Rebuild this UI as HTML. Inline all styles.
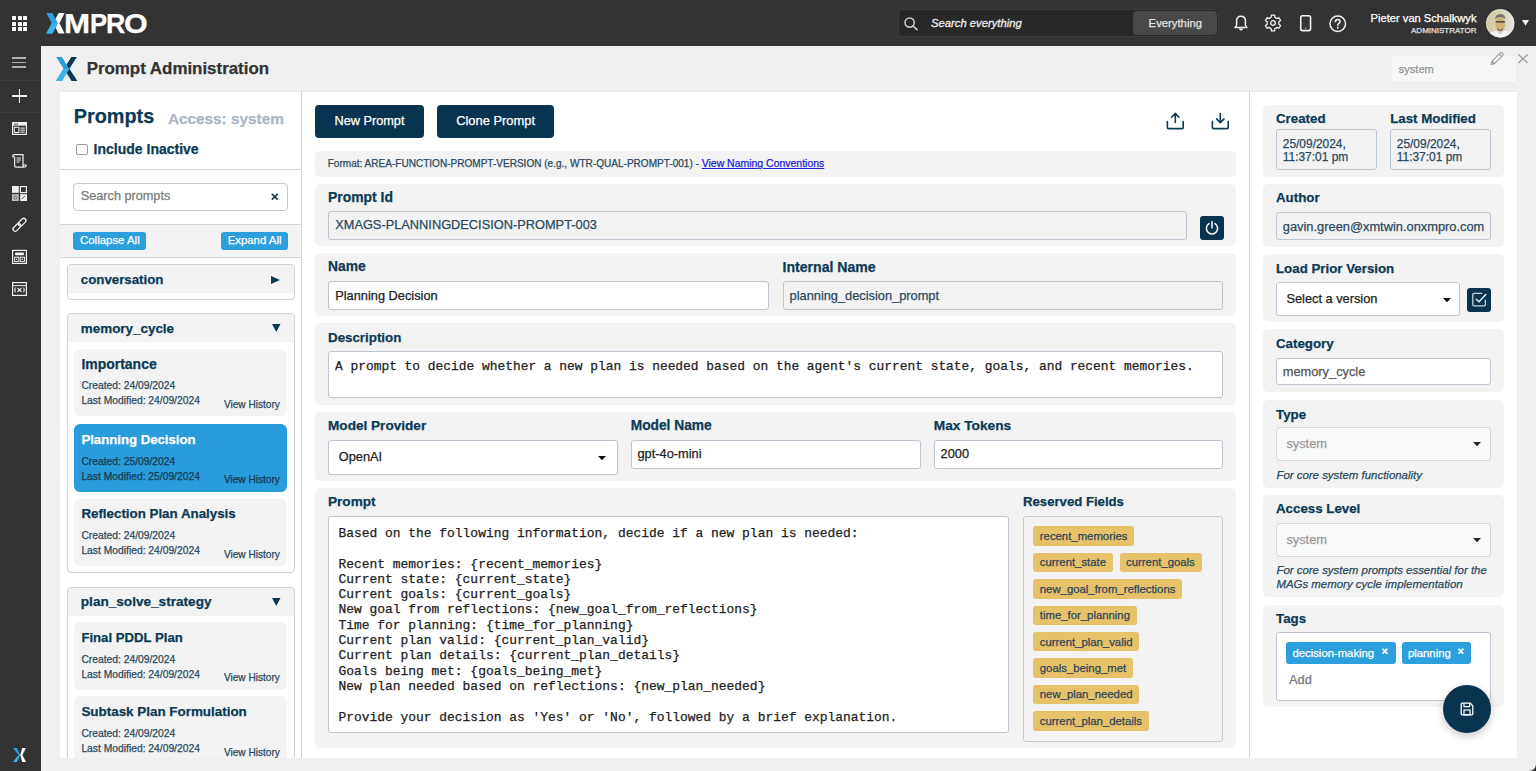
<!DOCTYPE html>
<html><head><meta charset="utf-8">
<style>
*{box-sizing:border-box;}
html,body{margin:0;padding:0;}
body{width:1536px;height:771px;overflow:hidden;position:relative;background:#333333;font-family:"Liberation Sans",sans-serif;}
.a{position:absolute;}
.t{position:absolute;white-space:nowrap;-webkit-text-stroke-width:0.25px;}
svg{position:absolute;overflow:visible;}
</style></head>
<body>
<div class="a" style="left:41px;top:46px;width:1495.00px;height:725.00px;background:#f0f0f0;border-bottom-right-radius:7px;"></div>
<div class="a" style="left:12.0px;top:16.0px;width:4.00px;height:4.00px;background:#fff;border-radius:0.5px;"></div>
<div class="a" style="left:17.5px;top:16.0px;width:4.00px;height:4.00px;background:#fff;border-radius:0.5px;"></div>
<div class="a" style="left:23.0px;top:16.0px;width:4.00px;height:4.00px;background:#fff;border-radius:0.5px;"></div>
<div class="a" style="left:12.0px;top:21.5px;width:4.00px;height:4.00px;background:#fff;border-radius:0.5px;"></div>
<div class="a" style="left:17.5px;top:21.5px;width:4.00px;height:4.00px;background:#fff;border-radius:0.5px;"></div>
<div class="a" style="left:23.0px;top:21.5px;width:4.00px;height:4.00px;background:#fff;border-radius:0.5px;"></div>
<div class="a" style="left:12.0px;top:27.0px;width:4.00px;height:4.00px;background:#fff;border-radius:0.5px;"></div>
<div class="a" style="left:17.5px;top:27.0px;width:4.00px;height:4.00px;background:#fff;border-radius:0.5px;"></div>
<div class="a" style="left:23.0px;top:27.0px;width:4.00px;height:4.00px;background:#fff;border-radius:0.5px;"></div>
<svg style="left:44px;top:11px" width="24" height="25" viewBox="44 11 24 25"><polygon points="58.6,13 64.6,13 59.4,23.2 64.6,33.4 58.6,33.4 53.2,23.2" fill="#ffffff"/>
<polygon points="46.3,13 52.4,13 57.9,23.2 52.4,33.4 46.3,33.4 51.7,23.2" fill="#2aa3e3"/>
<polygon points="51.7,23.2 57.9,23.2 52.4,33.4 46.3,33.4" fill="#38b5ec"/></svg>
<div class="t" style="left:63.90px;top:6.42px;font-size:28.5px;line-height:34.199999999999996px;color:#ffffff;font-weight:bold;font-family:'Liberation Sans',sans-serif;font-style:normal;transform:scaleX(1.1);transform-origin:0 0;">M</div>
<div class="t" style="left:89.70px;top:6.42px;font-size:28.5px;line-height:34.199999999999996px;color:#ffffff;font-weight:bold;font-family:'Liberation Sans',sans-serif;font-style:normal;transform:scaleX(0.9);transform-origin:0 0;">P</div>
<div class="t" style="left:105.70px;top:6.42px;font-size:28.5px;line-height:34.199999999999996px;color:#ffffff;font-weight:bold;font-family:'Liberation Sans',sans-serif;font-style:normal;transform:scaleX(0.94);transform-origin:0 0;">R</div>
<div class="t" style="left:123.80px;top:6.42px;font-size:28.5px;line-height:34.199999999999996px;color:#ffffff;font-weight:bold;font-family:'Liberation Sans',sans-serif;font-style:normal;transform:scaleX(1.07);transform-origin:0 0;">O</div>
<div class="a" style="left:897.5px;top:9px;width:321.00px;height:28.00px;background:#282828;border:1px solid #3c3c3c;border-radius:4px;"></div>
<svg style="left:904px;top:17px" width="15" height="13" viewBox="0 0 15 13"><circle cx="5.6" cy="5.6" r="4.6" fill="none" stroke="#cfcfcf" stroke-width="1.5"/><line x1="9" y1="9" x2="13" y2="12.6" stroke="#cfcfcf" stroke-width="1.6" stroke-linecap="round"/></svg>
<div class="t" style="left:931.00px;top:17.15px;font-size:11.25px;line-height:13.5px;color:#ececec;font-weight:normal;font-family:'Liberation Sans',sans-serif;font-style:italic;-webkit-text-stroke:0.3px #ececec;">Search everything</div>
<div class="a" style="left:1133px;top:11px;width:84.00px;height:24.00px;background:#484848;border-radius:4px;"></div>
<div class="t" style="left:1148.60px;top:17.10px;font-size:11.3px;line-height:13.56px;color:#e2e2e2;font-weight:normal;font-family:'Liberation Sans',sans-serif;font-style:normal;">Everything</div>
<svg style="left:1234px;top:15px" width="14" height="17" viewBox="0 0 14 17"><path d="M7 1.2 C4.2 1.2 2.6 3.4 2.6 6 V10.2 L1 12.6 H13 L11.4 10.2 V6 C11.4 3.4 9.8 1.2 7 1.2 Z" fill="none" stroke="#f2f2f2" stroke-width="1.5" stroke-linejoin="round"/><path d="M5.3 14 Q7 16.4 8.7 14 Z" fill="#f2f2f2" stroke="#f2f2f2" stroke-width="1"/></svg>
<svg style="left:1265.3px;top:15.4px" width="16" height="16" viewBox="0 0 16 16"><path fill="none" stroke="#f2f2f2" stroke-width="1.3" stroke-linejoin="round" d="M6.23 2.27 L6.41 0.16 L9.59 0.16 L9.77 2.27 L12.08 3.60 L14.00 2.70 L15.58 5.46 L13.85 6.67 L13.85 9.33 L15.58 10.54 L14.00 13.30 L12.08 12.40 L9.77 13.73 L9.59 15.84 L6.41 15.84 L6.23 13.73 L3.92 12.40 L2.00 13.30 L0.42 10.54 L2.15 9.33 L2.15 6.67 L0.42 5.46 L2.00 2.70 L3.92 3.60 Z"/><circle cx="8" cy="8" r="2.3" fill="none" stroke="#f2f2f2" stroke-width="1.3"/></svg>
<svg style="left:1299.8px;top:15.4px" width="11.5" height="16.5" viewBox="0 0 11.5 16.5"><rect x="0.75" y="0.75" width="9.8" height="14.9" rx="1.8" fill="none" stroke="#f2f2f2" stroke-width="1.6"/><circle cx="5.65" cy="13.2" r="0.6" fill="#f2f2f2"/></svg>
<svg style="left:1329px;top:14.5px" width="17.5" height="17.5" viewBox="0 0 18 18"><circle cx="9" cy="9" r="8" fill="none" stroke="#f2f2f2" stroke-width="1.5"/><path d="M6.6 7 Q6.6 4.6 9 4.6 Q11.4 4.6 11.4 6.8 Q11.4 8.2 9.8 8.9 Q9 9.3 9 10.6" fill="none" stroke="#f2f2f2" stroke-width="1.6" stroke-linecap="round"/><circle cx="9" cy="13.2" r="1" fill="#f2f2f2"/></svg>
<div class="t" style="right:59.50px;top:11.65px;font-size:11.15px;line-height:13.38px;color:#ffffff;font-weight:normal;font-family:'Liberation Sans',sans-serif;font-style:normal;">Pieter van Schalkwyk</div>
<div class="t" style="right:59.50px;top:25.73px;font-size:8.0px;line-height:9.6px;color:#e0e0e0;font-weight:normal;font-family:'Liberation Sans',sans-serif;font-style:normal;">ADMINISTRATOR</div>
<svg style="left:1485.5px;top:9.3px" width="28.5" height="28.8" viewBox="0 0 28.5 28.8"><defs><clipPath id="avc"><circle cx="14.25" cy="14.4" r="14.1"/></clipPath><linearGradient id="avbg" x1="0" y1="0" x2="1" y2="0"><stop offset="0" stop-color="#d4cba6"/><stop offset="0.5" stop-color="#d8d1b4"/><stop offset="1" stop-color="#e4e6e6"/></linearGradient></defs>
<g clip-path="url(#avc)"><rect x="0" y="0" width="28.5" height="28.8" fill="url(#avbg)"/>
<ellipse cx="14.3" cy="15" rx="4.8" ry="6.8" fill="#cfb173"/>
<path d="M9.2 11 Q9 5 14.2 5 Q19.4 5 19.4 10.6 Q18 7.8 14.2 8 Q10.6 7.8 9.2 11 Z" fill="#77746c"/>
<rect x="9.6" y="12" width="9.4" height="1.6" rx="0.6" fill="#4a4740"/>
<path d="M11 18.5 Q14.3 22.5 17.4 18.5 L17 21.2 Q14.3 23.4 11.4 21.2 Z" fill="#857a66"/>
<path d="M0 27 Q5 22 10.5 21.8 L14.3 25.5 L18 21.8 Q23.5 22 28.5 26 V28.8 H0 Z" fill="#f2f3f4"/></g>
<circle cx="14.25" cy="14.4" r="13.9" fill="none" stroke="#efefe8" stroke-width="0.6"/>
</svg>
<svg style="left:1521.5px;top:20px" width="7" height="6" viewBox="0 0 7 6"><polygon points="0,0 7,0 3.5,5.8" fill="#f2f2f2"/></svg>
<div class="a" style="left:12.3px;top:57.300000000000004px;width:14.20px;height:1.60px;background:#b0b0b0;"></div>
<div class="a" style="left:12.3px;top:61.800000000000004px;width:14.20px;height:1.60px;background:#b0b0b0;"></div>
<div class="a" style="left:12.3px;top:66.3px;width:14.20px;height:1.60px;background:#b0b0b0;"></div>
<div class="a" style="left:0px;top:79.5px;width:41.00px;height:1.00px;background:#3b3d40;"></div>
<div class="a" style="left:12px;top:95.3px;width:14.50px;height:1.40px;background:#f0f0f0;"></div>
<div class="a" style="left:18.55px;top:89px;width:1.40px;height:14.00px;background:#f0f0f0;"></div>
<div class="a" style="left:0px;top:111.6px;width:41.00px;height:1.00px;background:#3b3d40;"></div>
<svg style="left:12px;top:122px" width="15" height="13" viewBox="0 0 15 13"><rect x="0.6" y="0.6" width="13.8" height="11.8" fill="none" stroke="#f0f0f0" stroke-width="1.2"/><rect x="0.6" y="0.6" width="13.8" height="3" fill="#f0f0f0"/><rect x="2.5" y="1.4" width="1.2" height="1.4" fill="#333"/><rect x="4.5" y="1.4" width="1.2" height="1.4" fill="#333"/><rect x="2.3" y="5.3" width="4.6" height="5.2" fill="none" stroke="#f0f0f0" stroke-width="1"/><rect x="8.3" y="5.6" width="4.5" height="1" fill="#f0f0f0"/><rect x="8.3" y="7.6" width="4.5" height="1" fill="#f0f0f0"/><rect x="8.3" y="9.6" width="4.5" height="1" fill="#f0f0f0"/></svg>
<svg style="left:12px;top:154px" width="15" height="14" viewBox="0 0 15 14"><path d="M2.2 0.7 H11 V11.6 Q11 13.2 12.4 13.2 H4 Q2.6 13.2 2.6 11.6 V3 H0.8 V1.8 Q0.8 0.7 2.2 0.7 Z" fill="none" stroke="#f0f0f0" stroke-width="1.2"/><path d="M11 11 H14 V12 Q14 13.2 12.4 13.2" fill="none" stroke="#f0f0f0" stroke-width="1.2"/><rect x="4.5" y="3.5" width="4.5" height="1" fill="#f0f0f0"/><rect x="4.5" y="5.5" width="4.5" height="1" fill="#f0f0f0"/><rect x="4.5" y="7.5" width="3" height="1" fill="#f0f0f0"/></svg>
<svg style="left:12px;top:185.5px" width="15" height="15" viewBox="0 0 15 15"><rect x="0" y="0" width="6.8" height="6.8" fill="#f0f0f0"/><rect x="8.4" y="0.6" width="6" height="6" fill="none" stroke="#f0f0f0" stroke-width="1.2"/><rect x="0" y="8.2" width="6.8" height="6.8" fill="#bdbdbd"/><rect x="8.2" y="8.2" width="6.8" height="6.8" fill="#f0f0f0"/><path d="M9.8 13 L13 9.8" stroke="#555" stroke-width="1"/><circle cx="3.4" cy="11.6" r="1.6" fill="none" stroke="#555" stroke-width="0.8"/></svg>
<svg style="left:10px;top:215px" width="20" height="20" viewBox="10 215 20 20"><g transform="rotate(45 19.5 224.8)"><rect x="17.3" y="216.6" width="4.4" height="9" rx="2.2" fill="none" stroke="#f0f0f0" stroke-width="1.3"/><rect x="17.3" y="224" width="4.4" height="9" rx="2.2" fill="none" stroke="#f0f0f0" stroke-width="1.3"/></g></svg>
<svg style="left:10px;top:248px" width="20" height="20" viewBox="10 248 20 20"><rect x="12.6" y="250.4" width="13.8" height="13" fill="none" stroke="#f0f0f0" stroke-width="1.2"/><rect x="15" y="252.6" width="9" height="2.6" rx="1" fill="#f0f0f0"/><rect x="14.6" y="257.2" width="4.2" height="4.2" fill="none" stroke="#f0f0f0" stroke-width="1"/><rect x="20.2" y="257.2" width="4.2" height="4.2" fill="none" stroke="#f0f0f0" stroke-width="1"/><circle cx="16.7" cy="259.3" r="0.7" fill="#f0f0f0"/><circle cx="22.3" cy="259.3" r="0.7" fill="#f0f0f0"/></svg>
<svg style="left:10px;top:280px" width="20" height="20" viewBox="10 280 20 20"><rect x="12.6" y="282.6" width="13.8" height="12.8" fill="none" stroke="#f0f0f0" stroke-width="1.2"/><line x1="12.6" y1="285.6" x2="26.4" y2="285.6" stroke="#f0f0f0" stroke-width="1"/><path d="M15.4 287.6 Q14.2 289.9 15.4 292.2 M23.6 287.6 Q24.8 289.9 23.6 292.2 M17.4 287.8 L21.6 292 M21.6 287.8 L17.4 292" fill="none" stroke="#f0f0f0" stroke-width="1.1"/></svg>
<svg style="left:13px;top:748px" width="13" height="14" viewBox="0 0 13 14">
<polygon points="0,0 3.8,0 7.2,7 5.6,7" fill="#2aa3e3"/><polygon points="5.6,7 7.2,7 3.8,14 0,14" fill="#35b6ee"/>
<polygon points="9.2,0 13,0 9.4,7 7.2,7" fill="#ffffff"/><polygon points="7.2,7 9.4,7 13,14 9.2,14" fill="#ffffff"/></svg>
<svg style="left:54px;top:55px" width="25" height="28" viewBox="54 55 25 28"><polygon points="71.4,56.9 76.9,56.9 69.4,68.8 77.4,80.9 71.6,80.9 63.8,68.8" fill="#0b3a57"/>
<polygon points="56.2,56.9 61.9,56.9 69.2,68.8 61.9,80.9 56,80.9 63.5,68.8" fill="#2a9fdc"/>
<polygon points="63.5,68.8 69.2,68.8 61.9,80.9 56,80.9" fill="#3db5e8"/></svg>
<div class="t" style="left:86.70px;top:58.75px;font-size:16.9px;line-height:20.279999999999998px;color:#333333;font-weight:bold;font-family:'Liberation Sans',sans-serif;font-style:normal;">Prompt Administration</div>
<div class="a" style="left:1390.7px;top:54.6px;width:125.90px;height:28.50px;background:#f6f7f7;border:1px dotted #e4e6e6;"></div>
<div class="t" style="left:1398.80px;top:63.14px;font-size:11.05px;line-height:13.26px;color:#939393;font-weight:normal;font-family:'Liberation Sans',sans-serif;font-style:normal;">system</div>
<svg style="left:1490px;top:52px" width="14" height="13.5" viewBox="0 0 14 13.5"><path d="M1.2 12.4 L2 9.2 L10.4 0.9 Q11.3 0.1 12.2 0.9 L12.9 1.6 Q13.6 2.5 12.8 3.3 L4.4 11.6 Z M9.2 2.1 L11.6 4.5 M2 9.2 L4.4 11.6" fill="none" stroke="#9a9a9a" stroke-width="1.1" stroke-linejoin="round"/></svg>
<svg style="left:1517.5px;top:53.8px" width="10" height="9.6" viewBox="0 0 10 9.6"><path d="M0.5 0.5 L9.5 9.1 M9.5 0.5 L0.5 9.1" stroke="#9a9a9a" stroke-width="1.3"/></svg>
<div class="a" style="left:60px;top:91.5px;width:1457.00px;height:666.50px;background:#ffffff;box-shadow:0 -1px 1px rgba(0,0,0,0.03);"></div>
<div class="a" style="left:301px;top:91px;width:1.00px;height:667.00px;background:#cfd6df;"></div>
<div class="t" style="left:73.70px;top:105.41px;font-size:19.85px;line-height:23.82px;color:#0c3a55;font-weight:bold;font-family:'Liberation Sans',sans-serif;font-style:normal;">Prompts</div>
<div class="t" style="left:167.90px;top:109.68px;font-size:15.34px;line-height:18.407999999999998px;color:#a9b6c5;font-weight:bold;font-family:'Liberation Sans',sans-serif;font-style:normal;">Access: system</div>
<div class="a" style="left:76px;top:143.6px;width:11.50px;height:11.40px;background:#fff;border:1px solid #9a9a9a;border-radius:2px;"></div>
<div class="t" style="left:93.60px;top:140.75px;font-size:14.0px;line-height:16.8px;color:#0c3a55;font-weight:bold;font-family:'Liberation Sans',sans-serif;font-style:normal;">Include Inactive</div>
<div class="a" style="left:60px;top:168.5px;width:241.00px;height:1.00px;background:#cfd6df;"></div>
<div class="a" style="left:73px;top:183px;width:215.30px;height:28.00px;background:#fff;border:1px solid #c2cad4;border-radius:4px;"></div>
<div class="t" style="left:80.80px;top:189.00px;font-size:12.68px;line-height:15.216px;color:#7a7a7a;font-weight:normal;font-family:'Liberation Sans',sans-serif;font-style:normal;">Search prompts</div>
<svg style="left:270.5px;top:192.5px" width="7.5" height="7.5" viewBox="0 0 7.5 7.5"><path d="M0.8 0.8 L6.7 6.7 M6.7 0.8 L0.8 6.7" stroke="#1d3d52" stroke-width="1.7"/></svg>
<div class="a" style="left:60px;top:224px;width:241.00px;height:33.50px;background:#f3f3f3;border-top:1px solid #cfd6df;border-bottom:1px solid #cfd6df;"></div>
<div class="a" style="left:73px;top:231.8px;width:73.00px;height:18.50px;background:#2d9fdd;border-radius:3px;"></div>
<div class="t" style="left:80.00px;top:233.58px;font-size:11.43px;line-height:13.716px;color:#ffffff;font-weight:normal;font-family:'Liberation Sans',sans-serif;font-style:normal;">Collapse All</div>
<div class="a" style="left:220.8px;top:231.8px;width:67.20px;height:18.50px;background:#2d9fdd;border-radius:3px;"></div>
<div class="t" style="left:227.70px;top:233.62px;font-size:11.39px;line-height:13.668000000000001px;color:#ffffff;font-weight:normal;font-family:'Liberation Sans',sans-serif;font-style:normal;">Expand All</div>
<div class="a" style="left:60px;top:258px;width:241px;height:500px;overflow:hidden;">
<div class="a" style="left:-60px;top:-258px;width:1536px;height:771px;">
<div class="a" style="left:67px;top:264px;width:228.00px;height:36.40px;background:#fff;border:1px solid #c9d1db;border-radius:4px;"></div>
<div class="a" style="left:68px;top:265px;width:226.00px;height:28.00px;background:#f3f3f3;border-radius:3px 3px 0 0;"></div>
<div class="t" style="left:80.80px;top:271.64px;font-size:13.27px;line-height:15.924px;color:#0c3a55;font-weight:bold;font-family:'Liberation Sans',sans-serif;font-style:normal;">conversation</div>
<svg style="left:271px;top:275.6px" width="9" height="8" viewBox="0 0 9 8"><polygon points="0,0 9,4 0,8" fill="#0c3a55"/></svg>
<div class="a" style="left:67px;top:313.2px;width:228.00px;height:260.20px;background:#fff;border:1px solid #c9d1db;border-radius:4px;"></div>
<div class="a" style="left:68px;top:314.2px;width:226.00px;height:28.00px;background:#f3f3f3;border-radius:3px 3px 0 0;"></div>
<div class="t" style="left:80.80px;top:320.69px;font-size:13.43px;line-height:16.116px;color:#0c3a55;font-weight:bold;font-family:'Liberation Sans',sans-serif;font-style:normal;">memory_cycle</div>
<svg style="left:272px;top:324.2px" width="8.5" height="8" viewBox="0 0 8.5 8"><polygon points="0,0 8.5,0 4.25,8" fill="#0c3a55"/></svg>
<div class="a" style="left:74.3px;top:348.5px;width:213.00px;height:67.50px;background:#f3f3f3;border-radius:6px;"></div>
<div class="t" style="left:81.40px;top:355.88px;font-size:13.97px;line-height:16.764px;color:#0c3a55;font-weight:bold;font-family:'Liberation Sans',sans-serif;font-style:normal;">Importance</div>
<div class="t" style="left:81.40px;top:380.44px;font-size:10.31px;line-height:12.372px;color:#2b4a5e;font-weight:normal;font-family:'Liberation Sans',sans-serif;font-style:normal;">Created: 24/09/2024</div>
<div class="t" style="left:81.40px;top:395.44px;font-size:10.31px;line-height:12.372px;color:#2b4a5e;font-weight:normal;font-family:'Liberation Sans',sans-serif;font-style:normal;">Last Modified: 24/09/2024</div>
<div class="t" style="right:1256.20px;top:398.73px;font-size:10.11px;line-height:12.132px;color:#2b4a5e;font-weight:normal;font-family:'Liberation Sans',sans-serif;font-style:normal;">View History</div>
<div class="a" style="left:74.3px;top:424px;width:213.00px;height:67.50px;background:#2a9bdb;border-radius:6px;"></div>
<div class="t" style="left:81.40px;top:432.13px;font-size:13.18px;line-height:15.815999999999999px;color:#ffffff;font-weight:bold;font-family:'Liberation Sans',sans-serif;font-style:normal;">Planning Decision</div>
<div class="t" style="left:81.40px;top:455.94px;font-size:10.31px;line-height:12.372px;color:#173a50;font-weight:normal;font-family:'Liberation Sans',sans-serif;font-style:normal;">Created: 25/09/2024</div>
<div class="t" style="left:81.40px;top:470.94px;font-size:10.31px;line-height:12.372px;color:#173a50;font-weight:normal;font-family:'Liberation Sans',sans-serif;font-style:normal;">Last Modified: 25/09/2024</div>
<div class="t" style="right:1256.20px;top:474.23px;font-size:10.11px;line-height:12.132px;color:#173a50;font-weight:normal;font-family:'Liberation Sans',sans-serif;font-style:normal;">View History</div>
<div class="a" style="left:74.3px;top:498.5px;width:213.00px;height:67.50px;background:#f3f3f3;border-radius:6px;"></div>
<div class="t" style="left:81.40px;top:506.48px;font-size:13.33px;line-height:15.995999999999999px;color:#0c3a55;font-weight:bold;font-family:'Liberation Sans',sans-serif;font-style:normal;">Reflection Plan Analysis</div>
<div class="t" style="left:81.40px;top:530.44px;font-size:10.31px;line-height:12.372px;color:#2b4a5e;font-weight:normal;font-family:'Liberation Sans',sans-serif;font-style:normal;">Created: 24/09/2024</div>
<div class="t" style="left:81.40px;top:545.44px;font-size:10.31px;line-height:12.372px;color:#2b4a5e;font-weight:normal;font-family:'Liberation Sans',sans-serif;font-style:normal;">Last Modified: 24/09/2024</div>
<div class="t" style="right:1256.20px;top:548.73px;font-size:10.11px;line-height:12.132px;color:#2b4a5e;font-weight:normal;font-family:'Liberation Sans',sans-serif;font-style:normal;">View History</div>
<div class="a" style="left:67px;top:586.7px;width:228.00px;height:213.30px;background:#fff;border:1px solid #c9d1db;border-radius:4px;"></div>
<div class="a" style="left:68px;top:587.7px;width:226.00px;height:28.00px;background:#f3f3f3;border-radius:3px 3px 0 0;"></div>
<div class="t" style="left:80.80px;top:594.03px;font-size:13.6px;line-height:16.32px;color:#0c3a55;font-weight:bold;font-family:'Liberation Sans',sans-serif;font-style:normal;">plan_solve_strategy</div>
<svg style="left:272px;top:597.7px" width="8.5" height="8" viewBox="0 0 8.5 8"><polygon points="0,0 8.5,0 4.25,8" fill="#0c3a55"/></svg>
<div class="a" style="left:74.3px;top:622.1px;width:213.00px;height:67.50px;background:#f3f3f3;border-radius:6px;"></div>
<div class="t" style="left:81.40px;top:630.23px;font-size:13.17px;line-height:15.803999999999998px;color:#0c3a55;font-weight:bold;font-family:'Liberation Sans',sans-serif;font-style:normal;">Final PDDL Plan</div>
<div class="t" style="left:81.40px;top:654.04px;font-size:10.31px;line-height:12.372px;color:#2b4a5e;font-weight:normal;font-family:'Liberation Sans',sans-serif;font-style:normal;">Created: 24/09/2024</div>
<div class="t" style="left:81.40px;top:669.04px;font-size:10.31px;line-height:12.372px;color:#2b4a5e;font-weight:normal;font-family:'Liberation Sans',sans-serif;font-style:normal;">Last Modified: 24/09/2024</div>
<div class="t" style="right:1256.20px;top:672.33px;font-size:10.11px;line-height:12.132px;color:#2b4a5e;font-weight:normal;font-family:'Liberation Sans',sans-serif;font-style:normal;">View History</div>
<div class="a" style="left:74.3px;top:696.4px;width:213.00px;height:67.50px;background:#f3f3f3;border-radius:6px;"></div>
<div class="t" style="left:81.40px;top:704.31px;font-size:13.41px;line-height:16.092px;color:#0c3a55;font-weight:bold;font-family:'Liberation Sans',sans-serif;font-style:normal;">Subtask Plan Formulation</div>
<div class="t" style="left:81.40px;top:728.34px;font-size:10.31px;line-height:12.372px;color:#2b4a5e;font-weight:normal;font-family:'Liberation Sans',sans-serif;font-style:normal;">Created: 24/09/2024</div>
<div class="t" style="left:81.40px;top:743.34px;font-size:10.31px;line-height:12.372px;color:#2b4a5e;font-weight:normal;font-family:'Liberation Sans',sans-serif;font-style:normal;">Last Modified: 24/09/2024</div>
<div class="t" style="right:1256.20px;top:746.63px;font-size:10.11px;line-height:12.132px;color:#2b4a5e;font-weight:normal;font-family:'Liberation Sans',sans-serif;font-style:normal;">View History</div>
</div></div>
<div class="a" style="left:315px;top:104.5px;width:109.00px;height:33.50px;background:#08344f;border-radius:4px;"></div>
<div class="t" style="left:69.50px;width:600px;text-align:center;top:112.96px;font-size:12.72px;line-height:15.264px;color:#ffffff;font-weight:normal;font-family:'Liberation Sans',sans-serif;font-style:normal;">New Prompt</div>
<div class="a" style="left:437px;top:104.5px;width:117.20px;height:33.50px;background:#08344f;border-radius:4px;"></div>
<div class="t" style="left:195.60px;width:600px;text-align:center;top:112.77px;font-size:12.92px;line-height:15.504px;color:#ffffff;font-weight:normal;font-family:'Liberation Sans',sans-serif;font-style:normal;">Clone Prompt</div>
<svg style="left:1165px;top:111px" width="21" height="20" viewBox="1165 111 21 20"><path d="M1175.3 122.5 V113.6 M1171.6 117.2 L1175.3 113.4 L1179 117.2" fill="none" stroke="#0c3a55" stroke-width="1.6" stroke-linecap="round" stroke-linejoin="round"/><path d="M1167.4 121.5 V127.4 Q1167.4 128.6 1168.6 128.6 H1182 Q1183.2 128.6 1183.2 127.4 V121.5" fill="none" stroke="#0c3a55" stroke-width="1.6" stroke-linecap="round" stroke-linejoin="round"/></svg>
<svg style="left:1210px;top:111px" width="21" height="20" viewBox="1210 111 21 20"><path d="M1220.3 113.6 V122.5 M1216.6 118.9 L1220.3 122.7 L1224 118.9" fill="none" stroke="#0c3a55" stroke-width="1.6" stroke-linecap="round" stroke-linejoin="round"/><path d="M1212.4 121.5 V127.4 Q1212.4 128.6 1213.6 128.6 H1227 Q1228.2 128.6 1228.2 127.4 V121.5" fill="none" stroke="#0c3a55" stroke-width="1.6" stroke-linecap="round" stroke-linejoin="round"/></svg>
<div class="a" style="left:315px;top:151px;width:921.00px;height:25.60px;background:#f3f3f3;border-radius:4px;"></div>
<div class="t" style="left:327.70px;top:158.29px;font-size:10.05px;line-height:12.06px;color:#2b4a5e;font-weight:normal;font-family:'Liberation Sans',sans-serif;font-style:normal;">Format: AREA-FUNCTION-PROMPT-VERSION (e.g., WTR-QUAL-PROMPT-001) - <span style="color:#2323d6;text-decoration:underline;font-size:10.47px;">View Naming Conventions</span></div>
<div class="a" style="left:315px;top:183.5px;width:921.00px;height:62.70px;background:#f3f3f3;border-radius:5px;"></div>
<div class="t" style="left:328.00px;top:189.42px;font-size:13.93px;line-height:16.715999999999998px;color:#0c3a55;font-weight:bold;font-family:'Liberation Sans',sans-serif;font-style:normal;">Prompt Id</div>
<div class="a" style="left:328.2px;top:211.2px;width:858.80px;height:28.80px;background:#f3f3f3;border:1px solid #bcc6d2;border-radius:3px;"></div>
<div class="t" style="left:335.20px;top:217.18px;font-size:12.81px;line-height:15.372px;color:#2b4a5e;font-weight:normal;font-family:'Liberation Sans',sans-serif;font-style:normal;">XMAGS-PLANNINGDECISION-PROMPT-003</div>
<div class="a" style="left:1199.5px;top:216px;width:24.20px;height:24.00px;background:#08344f;border-radius:3px;"></div>
<svg style="left:1203.6px;top:220px" width="16" height="16" viewBox="0 0 16 16"><path d="M5 3.6 A5.6 5.6 0 1 0 11 3.6" fill="none" stroke="#fff" stroke-width="1.5" stroke-linecap="round"/><path d="M8 1.8 V8" stroke="#fff" stroke-width="1.5" stroke-linecap="round"/></svg>
<div class="a" style="left:315px;top:253.3px;width:921.00px;height:62.40px;background:#f3f3f3;border-radius:5px;"></div>
<div class="t" style="left:328.00px;top:259.34px;font-size:13.8px;line-height:16.56px;color:#0c3a55;font-weight:bold;font-family:'Liberation Sans',sans-serif;font-style:normal;">Name</div>
<div class="t" style="left:782.50px;top:259.05px;font-size:14.1px;line-height:16.919999999999998px;color:#0c3a55;font-weight:bold;font-family:'Liberation Sans',sans-serif;font-style:normal;">Internal Name</div>
<div class="a" style="left:328.2px;top:281.3px;width:441.30px;height:28.50px;background:#fff;border:1px solid #bcc6d2;border-radius:3px;"></div>
<div class="t" style="left:335.20px;top:288.08px;font-size:12.8px;line-height:15.36px;color:#222222;font-weight:normal;font-family:'Liberation Sans',sans-serif;font-style:normal;">Planning Decision</div>
<div class="a" style="left:782.6px;top:281.3px;width:440.40px;height:28.50px;background:#f3f3f3;border:1px solid #bcc6d2;border-radius:3px;"></div>
<div class="t" style="left:789.60px;top:288.08px;font-size:12.8px;line-height:15.36px;color:#2b4a5e;font-weight:normal;font-family:'Liberation Sans',sans-serif;font-style:normal;">planning_decision_prompt</div>
<div class="a" style="left:315px;top:323.4px;width:921.00px;height:81.60px;background:#f3f3f3;border-radius:5px;"></div>
<div class="t" style="left:328.00px;top:329.58px;font-size:13.33px;line-height:15.995999999999999px;color:#0c3a55;font-weight:bold;font-family:'Liberation Sans',sans-serif;font-style:normal;">Description</div>
<div class="a" style="left:327.8px;top:351.4px;width:895.20px;height:47.00px;background:#fff;border:1px solid #bcc6d2;border-radius:3px;"></div>
<div class="t" style="left:335.00px;top:358.72px;font-size:12.9px;line-height:15.48px;color:#222222;font-weight:normal;font-family:'Liberation Mono',monospace;font-style:normal;">A prompt to decide whether a new plan is needed based on the agent's current state, goals, and recent memories.</div>
<div class="a" style="left:315px;top:412.1px;width:921.00px;height:68.70px;background:#f3f3f3;border-radius:5px;"></div>
<div class="t" style="left:328.00px;top:418.33px;font-size:13.6px;line-height:16.32px;color:#0c3a55;font-weight:bold;font-family:'Liberation Sans',sans-serif;font-style:normal;">Model Provider</div>
<div class="t" style="left:630.70px;top:418.19px;font-size:13.75px;line-height:16.5px;color:#0c3a55;font-weight:bold;font-family:'Liberation Sans',sans-serif;font-style:normal;">Model Name</div>
<div class="t" style="left:933.80px;top:418.23px;font-size:13.7px;line-height:16.439999999999998px;color:#0c3a55;font-weight:bold;font-family:'Liberation Sans',sans-serif;font-style:normal;">Max Tokens</div>
<div class="a" style="left:327.8px;top:440.4px;width:289.80px;height:34.20px;background:#fff;border:1px solid #bcc6d2;border-radius:3px;"></div>
<div class="t" style="left:338.70px;top:449.48px;font-size:12.8px;line-height:15.36px;color:#222222;font-weight:normal;font-family:'Liberation Sans',sans-serif;font-style:normal;">OpenAI</div>
<svg style="left:598px;top:455.5px" width="8" height="4.5" viewBox="0 0 8 4.5"><polygon points="0,0 8,0 4,4.2" fill="#111"/></svg>
<div class="a" style="left:630.7px;top:440.4px;width:290.30px;height:28.20px;background:#fff;border:1px solid #bcc6d2;border-radius:3px;"></div>
<div class="t" style="left:637.50px;top:446.48px;font-size:12.8px;line-height:15.36px;color:#222222;font-weight:normal;font-family:'Liberation Sans',sans-serif;font-style:normal;">gpt-4o-mini</div>
<div class="a" style="left:933.8px;top:440.4px;width:289.20px;height:28.20px;background:#fff;border:1px solid #bcc6d2;border-radius:3px;"></div>
<div class="t" style="left:940.60px;top:446.48px;font-size:12.8px;line-height:15.36px;color:#222222;font-weight:normal;font-family:'Liberation Sans',sans-serif;font-style:normal;">2000</div>
<div class="a" style="left:315px;top:487.5px;width:921.00px;height:260.90px;background:#f3f3f3;border-radius:5px;"></div>
<div class="t" style="left:328.00px;top:493.93px;font-size:13.6px;line-height:16.32px;color:#0c3a55;font-weight:bold;font-family:'Liberation Sans',sans-serif;font-style:normal;">Prompt</div>
<div class="t" style="left:1023.00px;top:494.03px;font-size:13.17px;line-height:15.803999999999998px;color:#0c3a55;font-weight:bold;font-family:'Liberation Sans',sans-serif;font-style:normal;">Reserved Fields</div>
<div class="a" style="left:328.3px;top:515.5px;width:680.80px;height:217.20px;background:#fff;border:1px solid #bcc6d2;border-radius:3px;"></div>
<div class="t" style="left:338.40px;top:525.98px;font-size:12.95px;line-height:15.54px;color:#222222;font-weight:normal;font-family:'Liberation Mono',monospace;font-style:normal;">Based on the following information, decide if a new plan is needed:</div>
<div class="t" style="left:338.40px;top:556.58px;font-size:12.95px;line-height:15.54px;color:#222222;font-weight:normal;font-family:'Liberation Mono',monospace;font-style:normal;">Recent memories: {recent_memories}</div>
<div class="t" style="left:338.40px;top:571.88px;font-size:12.95px;line-height:15.54px;color:#222222;font-weight:normal;font-family:'Liberation Mono',monospace;font-style:normal;">Current state: {current_state}</div>
<div class="t" style="left:338.40px;top:587.18px;font-size:12.95px;line-height:15.54px;color:#222222;font-weight:normal;font-family:'Liberation Mono',monospace;font-style:normal;">Current goals: {current_goals}</div>
<div class="t" style="left:338.40px;top:602.48px;font-size:12.95px;line-height:15.54px;color:#222222;font-weight:normal;font-family:'Liberation Mono',monospace;font-style:normal;">New goal from reflections: {new_goal_from_reflections}</div>
<div class="t" style="left:338.40px;top:617.78px;font-size:12.95px;line-height:15.54px;color:#222222;font-weight:normal;font-family:'Liberation Mono',monospace;font-style:normal;">Time for planning: {time_for_planning}</div>
<div class="t" style="left:338.40px;top:633.08px;font-size:12.95px;line-height:15.54px;color:#222222;font-weight:normal;font-family:'Liberation Mono',monospace;font-style:normal;">Current plan valid: {current_plan_valid}</div>
<div class="t" style="left:338.40px;top:648.38px;font-size:12.95px;line-height:15.54px;color:#222222;font-weight:normal;font-family:'Liberation Mono',monospace;font-style:normal;">Current plan details: {current_plan_details}</div>
<div class="t" style="left:338.40px;top:663.68px;font-size:12.95px;line-height:15.54px;color:#222222;font-weight:normal;font-family:'Liberation Mono',monospace;font-style:normal;">Goals being met: {goals_being_met}</div>
<div class="t" style="left:338.40px;top:678.98px;font-size:12.95px;line-height:15.54px;color:#222222;font-weight:normal;font-family:'Liberation Mono',monospace;font-style:normal;">New plan needed based on reflections: {new_plan_needed}</div>
<div class="t" style="left:338.40px;top:709.58px;font-size:12.95px;line-height:15.54px;color:#222222;font-weight:normal;font-family:'Liberation Mono',monospace;font-style:normal;">Provide your decision as &#x27;Yes&#x27; or &#x27;No&#x27;, followed by a brief explanation.</div>
<div class="a" style="left:1022.8px;top:515.6px;width:200.70px;height:226.10px;background:#f3f3f3;border:1px solid #c3ccd7;border-radius:3px;"></div>
<div class="a" style="left:1033.3px;top:526.3px;width:100.87px;height:19.60px;background:#e6c26a;border-radius:3px;"></div>
<div class="t" style="left:1039.80px;top:529.96px;font-size:11.35px;line-height:13.62px;color:#2d4757;font-weight:normal;font-family:'Liberation Sans',sans-serif;font-style:normal;">recent_memories</div>
<div class="a" style="left:1033.3px;top:552.6999999999999px;width:79.44px;height:19.60px;background:#e6c26a;border-radius:3px;"></div>
<div class="t" style="left:1039.80px;top:556.36px;font-size:11.35px;line-height:13.62px;color:#2d4757;font-weight:normal;font-family:'Liberation Sans',sans-serif;font-style:normal;">current_state</div>
<div class="a" style="left:1119.537890625px;top:552.6999999999999px;width:81.97px;height:19.60px;background:#e6c26a;border-radius:3px;"></div>
<div class="t" style="left:1126.04px;top:556.36px;font-size:11.35px;line-height:13.62px;color:#2d4757;font-weight:normal;font-family:'Liberation Sans',sans-serif;font-style:normal;">current_goals</div>
<div class="a" style="left:1033.3px;top:579.0999999999999px;width:148.84px;height:19.60px;background:#e6c26a;border-radius:3px;"></div>
<div class="t" style="left:1039.80px;top:582.76px;font-size:11.35px;line-height:13.62px;color:#2d4757;font-weight:normal;font-family:'Liberation Sans',sans-serif;font-style:normal;">new_goal_from_reflections</div>
<div class="a" style="left:1033.3px;top:605.5px;width:103.42px;height:19.60px;background:#e6c26a;border-radius:3px;"></div>
<div class="t" style="left:1039.80px;top:609.16px;font-size:11.35px;line-height:13.62px;color:#2d4757;font-weight:normal;font-family:'Liberation Sans',sans-serif;font-style:normal;">time_for_planning</div>
<div class="a" style="left:1033.3px;top:631.9px;width:105.94px;height:19.60px;background:#e6c26a;border-radius:3px;"></div>
<div class="t" style="left:1039.80px;top:635.56px;font-size:11.35px;line-height:13.62px;color:#2d4757;font-weight:normal;font-family:'Liberation Sans',sans-serif;font-style:normal;">current_plan_valid</div>
<div class="a" style="left:1033.3px;top:658.3px;width:99.64px;height:19.60px;background:#e6c26a;border-radius:3px;"></div>
<div class="t" style="left:1039.80px;top:661.96px;font-size:11.35px;line-height:13.62px;color:#2d4757;font-weight:normal;font-family:'Liberation Sans',sans-serif;font-style:normal;">goals_being_met</div>
<div class="a" style="left:1033.3px;top:684.6999999999999px;width:105.97px;height:19.60px;background:#e6c26a;border-radius:3px;"></div>
<div class="t" style="left:1039.80px;top:688.36px;font-size:11.35px;line-height:13.62px;color:#2d4757;font-weight:normal;font-family:'Liberation Sans',sans-serif;font-style:normal;">new_plan_needed</div>
<div class="a" style="left:1033.3px;top:711.0999999999999px;width:115.41px;height:19.60px;background:#e6c26a;border-radius:3px;"></div>
<div class="t" style="left:1039.80px;top:714.76px;font-size:11.35px;line-height:13.62px;color:#2d4757;font-weight:normal;font-family:'Liberation Sans',sans-serif;font-style:normal;">current_plan_details</div>
<div class="a" style="left:1249px;top:91px;width:1.00px;height:667.00px;background:#cfd6df;"></div>
<div class="a" style="left:1263px;top:104.6px;width:241.00px;height:72.40px;background:#f3f3f3;border-radius:5px;"></div>
<div class="t" style="left:1276.00px;top:110.91px;font-size:13.3px;line-height:15.96px;color:#0c3a55;font-weight:bold;font-family:'Liberation Sans',sans-serif;font-style:normal;">Created</div>
<div class="t" style="left:1390.20px;top:110.91px;font-size:13.3px;line-height:15.96px;color:#0c3a55;font-weight:bold;font-family:'Liberation Sans',sans-serif;font-style:normal;">Last Modified</div>
<div class="a" style="left:1276px;top:129.2px;width:100.50px;height:41.30px;background:#f3f3f3;border:1px solid #bcc6d2;border-radius:3px;"></div>
<div class="a" style="left:1390.2px;top:129.2px;width:100.60px;height:41.30px;background:#f3f3f3;border:1px solid #bcc6d2;border-radius:3px;"></div>
<div class="t" style="left:1282.80px;top:136.71px;font-size:11.93px;line-height:14.315999999999999px;color:#2b4a5e;font-weight:normal;font-family:'Liberation Sans',sans-serif;font-style:normal;">25/09/2024,</div>
<div class="t" style="left:1282.80px;top:150.01px;font-size:11.93px;line-height:14.315999999999999px;color:#2b4a5e;font-weight:normal;font-family:'Liberation Sans',sans-serif;font-style:normal;">11:37:01 pm</div>
<div class="t" style="left:1396.80px;top:136.71px;font-size:11.93px;line-height:14.315999999999999px;color:#2b4a5e;font-weight:normal;font-family:'Liberation Sans',sans-serif;font-style:normal;">25/09/2024,</div>
<div class="t" style="left:1396.80px;top:150.01px;font-size:11.93px;line-height:14.315999999999999px;color:#2b4a5e;font-weight:normal;font-family:'Liberation Sans',sans-serif;font-style:normal;">11:37:01 pm</div>
<div class="a" style="left:1263px;top:183.8px;width:241.00px;height:63.10px;background:#f3f3f3;border-radius:5px;"></div>
<div class="t" style="left:1276.00px;top:190.41px;font-size:13.3px;line-height:15.96px;color:#0c3a55;font-weight:bold;font-family:'Liberation Sans',sans-serif;font-style:normal;">Author</div>
<div class="a" style="left:1276px;top:212.2px;width:214.80px;height:28.30px;background:#f3f3f3;border:1px solid #bcc6d2;border-radius:3px;"></div>
<div class="t" style="left:1282.80px;top:218.74px;font-size:12.85px;line-height:15.419999999999998px;color:#2b4a5e;font-weight:normal;font-family:'Liberation Sans',sans-serif;font-style:normal;">gavin.green@xmtwin.onxmpro.com</div>
<div class="a" style="left:1263px;top:253.9px;width:241.00px;height:68.10px;background:#f3f3f3;border-radius:5px;"></div>
<div class="t" style="left:1276.00px;top:260.71px;font-size:13.3px;line-height:15.96px;color:#0c3a55;font-weight:bold;font-family:'Liberation Sans',sans-serif;font-style:normal;">Load Prior Version</div>
<div class="a" style="left:1276px;top:282.4px;width:184.20px;height:34.10px;background:#fff;border:1px solid #bcc6d2;border-radius:3px;"></div>
<div class="t" style="left:1286.40px;top:291.38px;font-size:12.8px;line-height:15.36px;color:#222222;font-weight:normal;font-family:'Liberation Sans',sans-serif;font-style:normal;">Select a version</div>
<svg style="left:1442.8px;top:297.8px" width="8" height="4.5" viewBox="0 0 8 4.5"><polygon points="0,0 8,0 4,4.2" fill="#111"/></svg>
<div class="a" style="left:1467.3px;top:288px;width:23.40px;height:23.60px;background:#08344f;border-radius:3px;"></div>
<svg style="left:1470px;top:291px" width="18" height="18" viewBox="1470 291 18 18"><path d="M1485.4 300.2 V304.4 Q1485.4 305.8 1484 305.8 H1474.2 Q1472.8 305.8 1472.8 304.4 V294.8 Q1472.8 293.4 1474.2 293.4 H1481.8" fill="none" stroke="#c9d3da" stroke-width="1.3" stroke-linecap="round"/><path d="M1476.3 299.3 L1479 301.8 L1485.8 294.5" fill="none" stroke="#e8eef2" stroke-width="1.5" stroke-linecap="round" stroke-linejoin="round"/></svg>
<div class="a" style="left:1263px;top:329.4px;width:241.00px;height:62.60px;background:#f3f3f3;border-radius:5px;"></div>
<div class="t" style="left:1276.00px;top:336.31px;font-size:13.3px;line-height:15.96px;color:#0c3a55;font-weight:bold;font-family:'Liberation Sans',sans-serif;font-style:normal;">Category</div>
<div class="a" style="left:1276px;top:357.6px;width:214.80px;height:27.90px;background:#fff;border:1px solid #bcc6d2;border-radius:3px;"></div>
<div class="t" style="left:1282.80px;top:363.68px;font-size:12.8px;line-height:15.36px;color:#555555;font-weight:normal;font-family:'Liberation Sans',sans-serif;font-style:normal;">memory_cycle</div>
<div class="a" style="left:1263px;top:399.8px;width:241.00px;height:87.80px;background:#f3f3f3;border-radius:5px;"></div>
<div class="t" style="left:1276.00px;top:406.61px;font-size:13.3px;line-height:15.96px;color:#0c3a55;font-weight:bold;font-family:'Liberation Sans',sans-serif;font-style:normal;">Type</div>
<div class="a" style="left:1276px;top:427.3px;width:214.80px;height:34.00px;background:#f8f9f9;border:1px solid #d3d9e0;border-radius:3px;"></div>
<div class="t" style="left:1286.40px;top:436.28px;font-size:12.8px;line-height:15.36px;color:#9a9a9a;font-weight:normal;font-family:'Liberation Sans',sans-serif;font-style:normal;">system</div>
<svg style="left:1472.5px;top:442.2px" width="8" height="4.5" viewBox="0 0 8 4.5"><polygon points="0,0 8,0 4,4.2" fill="#222"/></svg>
<div class="t" style="left:1276.40px;top:469.36px;font-size:11.45px;line-height:13.739999999999998px;color:#2b4a5e;font-weight:normal;font-family:'Liberation Sans',sans-serif;font-style:italic;">For core system functionality</div>
<div class="a" style="left:1263px;top:495.1px;width:241.00px;height:101.90px;background:#f3f3f3;border-radius:5px;"></div>
<div class="t" style="left:1276.00px;top:501.41px;font-size:13.3px;line-height:15.96px;color:#0c3a55;font-weight:bold;font-family:'Liberation Sans',sans-serif;font-style:normal;">Access Level</div>
<div class="a" style="left:1276px;top:523.4px;width:214.80px;height:34.00px;background:#f8f9f9;border:1px solid #d3d9e0;border-radius:3px;"></div>
<div class="t" style="left:1286.40px;top:532.38px;font-size:12.8px;line-height:15.36px;color:#9a9a9a;font-weight:normal;font-family:'Liberation Sans',sans-serif;font-style:normal;">system</div>
<svg style="left:1472.5px;top:538.2px" width="8" height="4.5" viewBox="0 0 8 4.5"><polygon points="0,0 8,0 4,4.2" fill="#222"/></svg>
<div class="t" style="left:1276.40px;top:564.36px;font-size:11.45px;line-height:13.739999999999998px;color:#2b4a5e;font-weight:normal;font-family:'Liberation Sans',sans-serif;font-style:italic;">For core system prompts essential for the</div>
<div class="t" style="left:1276.40px;top:577.86px;font-size:11.45px;line-height:13.739999999999998px;color:#2b4a5e;font-weight:normal;font-family:'Liberation Sans',sans-serif;font-style:italic;">MAGs memory cycle implementation</div>
<div class="a" style="left:1263px;top:604.6px;width:241.00px;height:102.70px;background:#f3f3f3;border-radius:5px;"></div>
<div class="t" style="left:1276.00px;top:610.91px;font-size:13.3px;line-height:15.96px;color:#0c3a55;font-weight:bold;font-family:'Liberation Sans',sans-serif;font-style:normal;">Tags</div>
<div class="a" style="left:1275.8px;top:632.2px;width:215.20px;height:68.80px;background:#fff;border:1px solid #bcc6d2;border-radius:3px;"></div>
<div class="a" style="left:1286px;top:642.4px;width:109.50px;height:21.50px;background:#2d9fdd;border-radius:3px;"></div>
<div class="t" style="left:1292.50px;top:646.80px;font-size:11.3px;line-height:13.56px;color:#ffffff;font-weight:normal;font-family:'Liberation Sans',sans-serif;font-style:normal;">decision-making</div>
<div class="t" style="right:148.00px;top:645.39px;font-size:11px;line-height:13.2px;color:#ffffff;font-weight:bold;font-family:'Liberation Sans',sans-serif;font-style:normal;">&#215;</div>
<div class="a" style="left:1401.5px;top:642.4px;width:69.90px;height:21.50px;background:#2d9fdd;border-radius:3px;"></div>
<div class="t" style="left:1408.00px;top:646.80px;font-size:11.3px;line-height:13.56px;color:#ffffff;font-weight:normal;font-family:'Liberation Sans',sans-serif;font-style:normal;">planning</div>
<div class="t" style="right:72.00px;top:645.39px;font-size:11px;line-height:13.2px;color:#ffffff;font-weight:bold;font-family:'Liberation Sans',sans-serif;font-style:normal;">&#215;</div>
<div class="t" style="left:1289.00px;top:671.88px;font-size:12.8px;line-height:15.36px;color:#777777;font-weight:normal;font-family:'Liberation Sans',sans-serif;font-style:normal;">Add</div>
<div class="a" style="left:1443px;top:684.5px;width:48px;height:48px;border-radius:50%;background:#08344f;box-shadow:0 3px 8px rgba(0,0,0,0.22);"></div>
<svg style="left:1460px;top:701.5px" width="14" height="14" viewBox="0 0 14 14"><path d="M1.2 2.2 Q1.2 1.2 2.2 1.2 H10.2 L12.8 3.8 V11.8 Q12.8 12.8 11.8 12.8 H2.2 Q1.2 12.8 1.2 11.8 Z" fill="none" stroke="#fff" stroke-width="1.3"/><path d="M4 1.4 V4.6 H9.6 V1.4" fill="none" stroke="#fff" stroke-width="1.2"/><rect x="4" y="8" width="6" height="4.8" fill="none" stroke="#fff" stroke-width="1.2"/></svg>
</body></html>
